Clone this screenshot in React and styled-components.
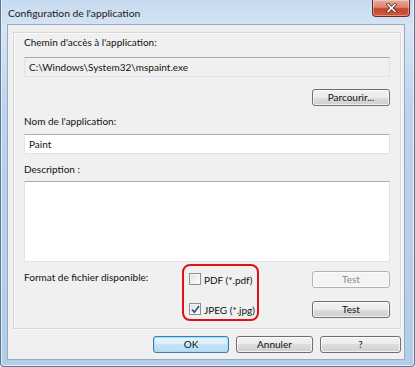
import React from "react";
import styled, { createGlobalStyle } from "styled-components";

const Global = createGlobalStyle`
  html, body { margin: 0; padding: 0; background: #fff; }
  body { font-family: Lato, "Open Sans", sans-serif; font-size: 10px; color: #111; }
  * { box-sizing: border-box; }
`;

const Window = styled.div`
  width: 415px;
  height: 367px;
  display: flex;
  flex-direction: column;
  border: 1px solid #5d7693;
  border-top: none;
  border-radius: 0 0 4px 4px;
  padding: 0 9px 6px 6px;
  background: linear-gradient(180deg, #c7daef 0%, #d6e5f5 8%, #bcd3ec 30%, #b3cce8 100%);
  box-shadow: inset 1px 0 0 #e4eef9, inset -1px 0 0 #e4eef9, inset 0 -1px 0 #e4eef9;
`;

const TitleBar = styled.div`
  height: 24px;
  display: flex;
  align-items: center;
  position: relative;
  padding-top: 2px;
`;

const Title = styled.span`
  color: #1a1a1a;
  font-size: 10.3px;
  margin-left: 1px;
`;

const CloseBtn = styled.div`
  position: absolute;
  top: 0;
  right: -5px;
  width: 38px;
  height: 17px;
  border: 1px solid #6b2c22;
  border-top: none;
  border-radius: 0 0 4px 4px;
  background: linear-gradient(180deg, #e9a99b 0%, #dc8572 45%, #c7452c 55%, #d0583c 100%);
  box-shadow: inset 0 0 0 1px rgba(255, 255, 255, 0.35);
  display: flex;
  align-items: center;
  justify-content: center;
`;

const Client = styled.div`
  flex: 1;
  display: flex;
  flex-direction: column;
  background: #f0f0f0;
  border: 1px solid #93abc6;
  padding: 7px 3px 6px 5px;
`;

const Group = styled.div`
  flex: 1;
  display: flex;
  flex-direction: column;
  border: 1px solid #d8d8d8;
  box-shadow: inset 1px 1px 0 #fbfbfb, 1px 1px 0 #fbfbfb;
  padding: 2px 10px 7px 10px;
`;

const Label = styled.div`
  height: 15px;
  line-height: 15px;
  margin-top: ${(p) => p.$mt || 0}px;
  white-space: nowrap;
`;

const Field = styled.div`
  height: ${(p) => p.$h || 20}px;
  margin-top: ${(p) => p.$mt || 0}px;
  border: 1px solid #e2e3ea;
  border-top-color: #abadb3;
  background: ${(p) => (p.$readonly ? "#f0f0f0" : "#ffffff")};
  padding: 0 4px;
  display: flex;
  align-items: ${(p) => (p.$multi ? "flex-start" : "center")};
  white-space: nowrap;
`;

const ButtonRow = styled.div`
  display: flex;
  justify-content: flex-end;
  gap: ${(p) => p.$gap || 0}px;
  margin-top: ${(p) => p.$mt || 0}px;
`;

const Button = styled.button`
  width: ${(p) => p.$w || 78}px;
  height: 17px;
  padding: 0;
  font-family: Lato, "Open Sans", sans-serif;
  font-size: 10px;
  line-height: 15px;
  color: ${(p) => (p.disabled ? "#8a8a8a" : "#111")};
  border-radius: 3px;
  border: 1px solid ${(p) => (p.$default ? "#3c7fb1" : p.disabled ? "#b0b4b8" : "#707070")};
  background: ${(p) =>
    p.disabled
      ? "#f4f4f4"
      : p.$default
      ? "linear-gradient(180deg, #e5f3fb 0%, #d9eefa 50%, #c4e4f8 50%, #b7dcf4 100%)"
      : "linear-gradient(180deg, #f2f2f2 0%, #ebebeb 50%, #dddddd 50%, #cfcfcf 100%)"};
  box-shadow: inset 0 0 0 1px ${(p) => (p.$default ? "#a6dcf6" : "rgba(255,255,255,0.7)")};
  cursor: default;
`;

const FormatRow = styled.div`
  display: flex;
  margin-top: 2px;
`;

const FormatLabel = styled.div`
  width: 158px;
  padding-top: 6px;
  line-height: 15px;
  white-space: nowrap;
`;

const Highlight = styled.div`
  width: 77px;
  height: 57px;
  border: 2px solid #e0101a;
  border-radius: 8px;
  padding: 5px 0 1px 5px;
  display: flex;
  flex-direction: column;
  gap: 13px;
`;

const CheckRow = styled.label`
  height: 17px;
  display: flex;
  align-items: center;
  gap: 3px;
  white-space: nowrap;
`;

const Box = styled.span`
  width: 12px;
  height: 12px;
  border: 1px solid #8f8f8f;
  background: linear-gradient(135deg, #dcdcdc 0%, #f4f4f4 60%, #ffffff 100%);
  box-shadow: inset 0 0 0 1px #f4f4f4;
  display: flex;
  align-items: center;
  justify-content: center;
  margin-top: -1px;
`;

const TestCol = styled.div`
  margin-left: auto;
  padding-top: 7px;
  display: flex;
  flex-direction: column;
  gap: 13px;
`;

function Check({ checked, children }) {
  return (
    <CheckRow>
      <Box>
        {checked && (
          <svg width="9" height="9" viewBox="0 0 9 9">
            <path d="M1 4.5 L3.4 7.2 L8 1" fill="none" stroke="#2f4b8a" strokeWidth="1.6" />
          </svg>
        )}
      </Box>
      <span>{children}</span>
    </CheckRow>
  );
}

export default function App() {
  return (
    <>
      <Global />
      <Window>
        <TitleBar>
          <Title>Configuration de l'application</Title>
          <CloseBtn>
            <svg width="11" height="10" viewBox="0 0 11 10">
              <path d="M2 1.5 L9 8.5 M9 1.5 L2 8.5" stroke="#5a2a24" strokeWidth="3.2" strokeLinecap="square" />
              <path d="M2 1.5 L9 8.5 M9 1.5 L2 8.5" stroke="#ffffff" strokeWidth="1.6" strokeLinecap="square" />
            </svg>
          </CloseBtn>
        </TitleBar>
        <Client>
          <Group>
            <Label>Chemin d'accès à l'application:</Label>
            <Field $readonly $mt={7}>C:\Windows\System32\mspaint.exe</Field>
            <ButtonRow $mt={12}>
              <Button>Parcourir...</Button>
            </ButtonRow>
            <Label $mt={8}>Nom de l'application:</Label>
            <Field $mt={5}>Paint</Field>
            <Label $mt={8}>Description :</Label>
            <Field $mt={4} $h={81} $multi />
            <FormatRow>
              <FormatLabel>Format de fichier disponible:</FormatLabel>
              <Highlight>
                <Check>PDF (*.pdf)</Check>
                <Check checked>JPEG (*.jpg)</Check>
              </Highlight>
              <TestCol>
                <Button disabled>Test</Button>
                <Button>Test</Button>
              </TestCol>
            </FormatRow>
          </Group>
          <ButtonRow $mt={7} $gap={7}>
            <Button $default $w={76}>OK</Button>
            <Button $w={77}>Annuler</Button>
            <Button $w={81}>?</Button>
          </ButtonRow>
        </Client>
      </Window>
    </>
  );
}
